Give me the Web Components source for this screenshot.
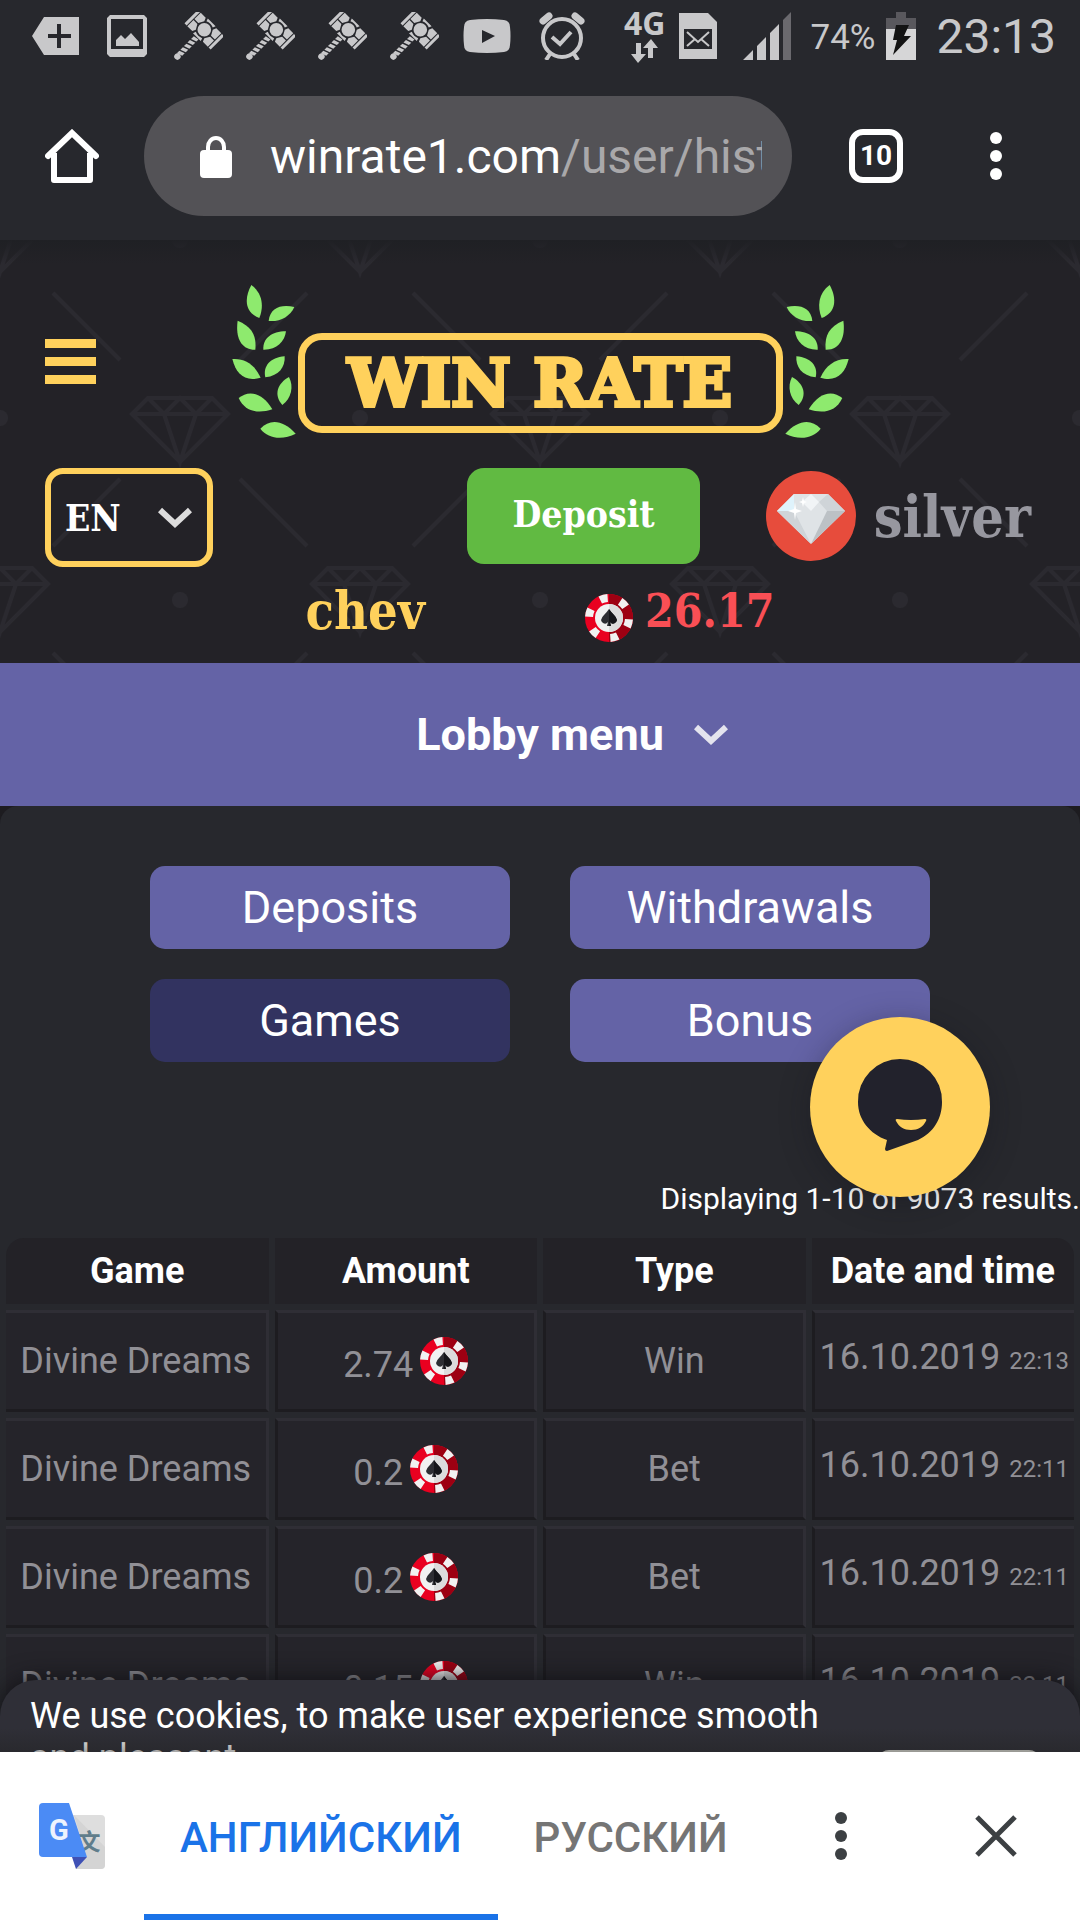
<!DOCTYPE html>
<html lang="en">
<head>
<meta charset="utf-8">
<meta name="viewport" content="width=device-width, initial-scale=1">
<title>Win Rate - History</title>
<style>
  :root {
    --bar: #27282d;
    --dark: #232227;
    --gold: #ffd15c;
    --purple: #6463a6;
    --slab: "DejaVu Serif Condensed", "DejaVu Serif", serif;
  }

  body {
    margin: 0;
    height: 100vh;
    display: flex;
    flex-direction: column;
    overflow: hidden;
    background: var(--bar);
    color: #fff;
    font-family: Roboto, sans-serif;
  }
</style>
</head>
<body>
<status-bar></status-bar>
<browser-bar tabs="10"><span slot="host">winrate1.com</span><span slot="path">/user/hist</span></browser-bar>
<web-view>
  <site-header user="chev" balance="26.17" rank="silver"></site-header>
  <lobby-menu>Lobby menu</lobby-menu>
  <history-panel>
    <nav-button slot="nav">Deposits</nav-button>
    <nav-button slot="nav">Withdrawals</nav-button>
    <nav-button slot="nav" active>Games</nav-button>
    <nav-button slot="nav">Bonus</nav-button>
    <span slot="summary">Displaying 1-10 of 9073 results.</span>
    <history-table data='[
      {"game":"Divine Dreams","amount":"2.74","type":"Win","date":"16.10.2019","time":"22:13"},
      {"game":"Divine Dreams","amount":"0.2","type":"Bet","date":"16.10.2019","time":"22:11"},
      {"game":"Divine Dreams","amount":"0.2","type":"Bet","date":"16.10.2019","time":"22:11"},
      {"game":"Divine Dreams","amount":"0.15","type":"Win","date":"16.10.2019","time":"22:11"}
    ]'></history-table>
  </history-panel>
  <chat-button slot="overlay"></chat-button>
  <cookie-banner slot="overlay">We use cookies, to make user experience smooth and pleasant</cookie-banner>
</web-view>
<translate-bar></translate-bar>

<script>
function define(name, render) {
  customElements.define(name, class extends HTMLElement {
    constructor() {
      super();
      this.attachShadow({ mode: "open" });
      this.shadowRoot.innerHTML = render(this);
    }
  });
}

const buttonReset = `
  button {
    margin: 0;
    padding: 0;
    border: none;
    background: none;
    color: inherit;
    font: inherit;
    cursor: pointer;
  }
  svg {
    display: block;
    flex: none;
  }
`;

const hammer = `
  <svg width="50" height="48" viewBox="0 0 50 48" fill="#c8c8ca">
    <g transform="translate(31.3 17.7) rotate(45)">
      <circle r="6.8"/>
      <path d="M-18.5-9.5h3v19h-3zM15.5-9.5h3v19h-3z"/>
      <path d="M-14.5-9.5h7l1.5 3.5-3 5.5h-5.5zM-14.5.8h5.5l3 5.2-1.5 3.5h-7zM14.5-9.5h-7L6-6l3 5.5h5.500zM14.500.8H9L6 6l1.500 3.500h7z"/>
      <path d="M-5.500-10.500h11L4.500-7.500Q0-9.500-4.500-7.500zM-5.500 10.500h11L4.500 7.500Q0 9.500-4.500 7.500z"/>
      <path d="M-2.800 12l5.600-1v3l-5.600 2zM-2.800 17.500l5.600-2v3.500l-5.600 2zM-2.800 22.500l5.600-2V24l-5.600 2zM-2.800 27.500l5.600-2V29l-5.600 2zM-2.800 32.500l5.600-2V34l-5.600 2z"/>
      <circle cy="38" r="3.200"/>
    </g>
  </svg>
`;

define("status-bar", () => `
  <style>
    :host {
      display: flex;
      align-items: center;
      justify-content: space-between;
      height: 72px;
      padding: 0 24px 0 32px;
      color: #c8c8ca;
      flex: none;
    }
    div {
      display: flex;
      align-items: center;
    }
    .left { gap: 22px; }
    .photo { margin: 0 4px 0 6px; }
    .video { margin-left: 2px; }
    .alarm { margin-left: 6px; }
    svg { display: block; }
    .net { flex-direction: column; font: 700 32px/28px "Noto Sans", sans-serif; gap: 2px; }
    .sim { margin: 0 26px 0 14px; }
    .percent { font-size: 35px; line-height: 44px; padding-top: 4px; margin: 0 11px 0 18px; }
    time { font-size: 48px; line-height: 56px; padding-top: 2px; margin-left: 20px; }
  </style>
  <div class="left">
    <svg width="47" height="38" viewBox="0 0 47 38"><path fill="#c8c8ca" fill-rule="evenodd" d="M12 0h35v38H12L0 19zM25 7v10H16v4h9v10h4V21h10v-4H29V7z"/></svg>
    <svg class="photo" width="40" height="42" viewBox="0 0 40 42"><path fill="#c8c8ca" fill-rule="evenodd" d="M3 0h34l3 3v36l-3 3H3l-3-3V3zM4 4v30h32V4zM9 31v-6l5-5 4 4 6-6 8 9v4z"/></svg>
    ${hammer.repeat(4)}
    <svg class="video" width="48" height="34" viewBox="0 0 48 34"><path fill="#c8c8ca" fill-rule="evenodd" d="M7 1Q24-1 41 1q6 1 6 7 1 9 0 18 0 6-6 7-17 2-34 0-6-1-6-7-1-9 0-18 0-6 6-7zm12 10v13l13-7z"/></svg>
    <svg class="alarm" width="46" height="48" viewBox="0 0 46 48" fill="none" stroke="#c8c8ca">
      <circle cx="23" cy="26" r="19" stroke-width="4"/>
      <path stroke-width="4" d="M13 25l8 7 11-12M11 42l-4 6M35 42l4 6"/>
      <path stroke-width="7" stroke-linecap="round" d="M4 9l6-5M42 9l-6-5"/>
    </svg>
  </div>
  <div>
    <div class="net">4G
      <svg width="28" height="24" viewBox="0 0 28 24"><path fill="#c8c8ca" d="M5 4h5v11h5L7 24 0 15h5zM17 19V9h-5l8-9 7 9h-5v10z"/></svg>
    </div>
    <svg class="sim" width="38" height="46" viewBox="0 0 38 46"><path fill="#c8c8ca" d="M0 0h29l9 9v37H0z"/><path fill="#27282d" d="M5 16h28v20H5z"/><path fill="none" stroke="#c8c8ca" stroke-width="2" d="M8 19l11 10 11-10M8 33l8-7M30 33l-8-7"/></svg>
    <svg width="49" height="48" viewBox="0 0 49 48"><path fill="#c8c8ca" d="M0 48l10-10v10zM14 34l9-9v23h-9zM27 21l9-9v36h-9z"/><path fill="#6a696e" d="M40 8l8-8v48h-8z"/></svg>
    <span class="percent">74%</span>
    <svg width="30" height="48" viewBox="0 0 30 48"><path fill="#59585d" d="M10 0h10v6h10v12H0V6h10z"/><path fill="#d6d6d7" d="M0 17h30v31H0z"/><path fill="#141414" d="M10 13h13l-5 11h7L7 43l4-15H7z"/></svg>
    <time>23:13</time>
  </div>
`);

define("browser-bar", (el) => `
  <style>
    ${buttonReset}
    :host {
      display: flex;
      align-items: center;
      height: 168px;
      padding-right: 24px;
      flex: none;
    }
    .home { width: 144px; }
    button {
      width: 120px;
      display: flex;
      justify-content: center;
      align-items: center;
    }
    .url {
      flex: 1;
      min-width: 0;
      height: 120px;
      margin-right: 24px;
      padding: 2px 30px 0 56px;
      border-radius: 60px;
      background: #535256;
      justify-content: flex-start;
      gap: 38px;
      font-size: 48px;
    }
    .address {
      flex: 1;
      overflow: hidden;
      white-space: nowrap;
      text-align: left;
      line-height: 60px;
    }
    ::slotted([slot="path"]) { color: #a9a8aa; }
    .count {
      box-sizing: border-box;
      width: 54px;
      height: 54px;
      border: 6px solid #fff;
      border-radius: 14px;
      font: 700 28px/42px Roboto, sans-serif;
    }
  </style>
  <button class="home" aria-label="Home">
    <svg width="54" height="54" viewBox="0 0 54 54" fill="none" stroke="#fff" stroke-width="6" stroke-linecap="round" stroke-linejoin="round"><path stroke-linecap="butt" d="M9 24v27h36V24"/><path d="M3 27L27 4l24 23" stroke-linejoin="miter"/></svg>
  </button>
  <button class="url" aria-label="Address">
    <svg width="32" height="42" viewBox="0 0 32 42"><rect y="14" width="32" height="28" rx="4" fill="#fff"/><path d="M8 17v-6a8 9 0 0 1 16 0v6" fill="none" stroke="#fff" stroke-width="4"/></svg>
    <span class="address"><slot name="host"></slot><slot name="path"></slot></span>
  </button>
  <button aria-label="Tabs"><span class="count">${el.getAttribute("tabs")}</span></button>
  <button aria-label="Menu">
    <svg width="12" height="48" viewBox="0 0 12 48" fill="#fff"><circle cx="6" cy="6" r="6"/><circle cx="6" cy="24" r="6"/><circle cx="6" cy="42" r="6"/></svg>
  </button>
`);

define("web-view", () => `
  <style>
    :host {
      display: block;
      position: relative;
      flex: 1;
      min-height: 0;
      overflow: hidden;
      background: #1d1c20;
    }
  </style>
  <slot></slot>
  <slot name="overlay"></slot>
`);

define("poker-chip", () => `
  <style>
    :host { display: inline-block; }
    svg { display: block; }
  </style>
  <svg width="48" height="48" viewBox="0 0 48 48">
    <circle cx="24" cy="24" r="24" fill="#e90020"/>
    <path fill="#9d0012" d="M24 0a24 24 0 0 1 0 48z"/>
    <circle cx="24" cy="24" r="20" fill="none" stroke="#f1f1f1" stroke-width="8" pathLength="360" stroke-dasharray="22 38" stroke-dashoffset="-4"/>
    <circle cx="24" cy="24" r="14" fill="#f1f1f1"/>
    <path fill="#dcdcdc" d="M24 10a14 14 0 0 1 0 28z"/>
    <path fill="#2d2e33" d="M24 15q2 3 5 6 5 5 1 8-3 2-5-1l1 4h-4l1-4q-2 3-5 1-4-3 1-8 3-3 5-6z"/>
    <path fill="#15161a" d="M24 15q2 3 5 6 5 5 1 8-3 2-5-1l1 4h-2z"/>
  </svg>
`);

define("win-logo", () => {
  const laurel = `
    <svg width="66" height="153" viewBox="36 45 198 459" fill="#8eea6e">
      <path d="M94 45C72 85 74 128 118 144C132 110 128 70 94 45"/>
      <path d="M146 153C150 112 185 102 223 111C210 140 180 156 146 153"/>
      <path d="M53 152C46 200 62 240 106 239C110 195 95 170 53 152"/>
      <path d="M130 239C128 205 155 184 198 184C194 215 170 240 130 239"/>
      <path d="M37 267C48 312 75 337 122 323C105 285 75 264 37 267"/>
      <path d="M136 322C128 290 150 262 194 259C196 290 178 318 136 322"/>
      <path d="M187 405C160 375 172 340 207 321C222 350 214 385 187 405"/>
      <path d="M56 384C85 360 125 365 157 418C115 432 75 426 56 384"/>
      <path d="M121 476C150 445 190 450 227 491C190 510 145 508 121 476"/>
    </svg>
  `;
  return `
    <style>
      :host { display: block; }
      a {
        display: flex;
        align-items: flex-end;
        color: var(--gold);
        text-decoration: none;
      }
      svg { display: block; }
      .mirror svg { transform: scaleX(-1); }
      .name {
        box-sizing: border-box;
        width: 485px;
        height: 100px;
        margin-bottom: 5px;
        border: 7px solid var(--gold);
        border-radius: 24px;
        text-align: center;
        font: 700 65px/86px "DejaVu Serif", serif;
        -webkit-text-stroke: 4px var(--gold);
        stroke-linejoin: round;
        white-space: nowrap;
      }
    </style>
    <a href="#">${laurel}<span class="name">WIN RATE</span><span class="mirror">${laurel}</span></a>
  `;
});

// 360px tile: two diamonds, two dots and four strokes
const tile = encodeURIComponent(`
  <svg xmlns="http://www.w3.org/2000/svg" xmlns:xlink="http://www.w3.org/1999/xlink" width="360" height="360" fill="none" stroke="#2b2a30" stroke-width="4">
    <defs><path id="d" d="M-32 2H32L48 18L0 66L-48 18ZM-48 18H48M-32 2L-16 18L0 2L16 18L32 2M-16 18L0 66L16 18"/></defs>
    <use xlink:href="#d"/><use xlink:href="#d" x="360"/><use xlink:href="#d" x="180" y="190"/>
    <g fill="#2b2a30" stroke="none"><circle cx="180" cy="34" r="8"/><circle cy="212" r="8"/><circle cx="360" cy="212" r="8"/></g>
    <path d="M53 87L120 154M307 87L240 154M120 273L53 340M240 273L307 340"/>
  </svg>
`);

const chevron = encodeURIComponent(`<svg xmlns="http://www.w3.org/2000/svg" width="34" height="22" fill="none" stroke="#ddd" stroke-width="6"><path d="M2 3L17 17L32 3"/></svg>`);

define("site-header", (el) => `
  <style>
    ${buttonReset}
    :host {
      display: block;
      padding: 45px 45px 0;
      background: linear-gradient(#1f2024, transparent 24px), url("data:image/svg+xml,${tile}") 0 -34px, var(--dark);
      font-family: var(--slab);
      font-weight: 700;
    }
    .top {
      display: grid;
      grid-template-columns: 1fr auto 1fr;
      align-items: center;
      justify-items: start;
    }
    .actions {
      display: flex;
      justify-content: space-between;
      margin-top: 30px;
    }
    select {
      appearance: none;
      width: 168px;
      height: 99px;
      padding: 0 0 0 14px;
      border: 6px solid var(--gold);
      border-radius: 18px;
      background: url("data:image/svg+xml,${chevron}") right 15px center no-repeat;
      color: #fff;
      font: 700 37px var(--slab);
    }
    .group {
      display: flex;
      align-items: center;
      height: 96px;
    }
    .deposit {
      height: 96px;
      padding: 0 45px 4px;
      margin-right: 66px;
      border-radius: 17px;
      background: #61ba42;
      color: #fff;
      font-size: 37px;
    }
    .rank {
      margin: 0 4px 0 18px;
      color: #97979f;
      font-size: 57px;
    }
    .account {
      display: flex;
      justify-content: center;
      gap: 160px;
      line-height: 88px;
      padding-bottom: 8px;
      font-size: 52px;
      color: var(--gold);
    }
    .balance {
      display: flex;
      align-items: center;
      gap: 12px;
      color: #f94f55;
      font-size: 46px;
    }
    poker-chip { margin-top: 14px; }
  </style>
  <div class="top">
    <button aria-label="Open menu">
      <svg width="51" height="45" viewBox="0 0 51 45" fill="#ffd15c"><path d="M0 0h51v9H0zM0 18h51v9H0zM0 36h51v9H0z"/></svg>
    </button>
    <win-logo></win-logo>
  </div>
  <div class="actions">
    <select aria-label="Language"><option>EN</option><option>RU</option></select>
    <div class="group">
      <button class="deposit">Deposit</button>
      <svg width="90" height="90" viewBox="0 0 90 90">
        <circle cx="45" cy="45" r="45" fill="#e74c3c"/>
        <path fill="#dfe3e6" d="M28 23h34l17 17-34 33-34-33z"/>
        <path fill="#dff3fc" d="M11 40l17-17v17z"/>
        <path fill="#cfd4d8" d="M62 23l17 17H61l-8-9zM11 40h17l17 33z"/>
        <path fill="#bcc1c5" d="M79 40H61L45 73z"/>
        <path fill="#f1f4f6" d="M45 23l8 8-8 9-9-9z"/>
        <path fill="#fff" d="M29 31l1 7 6 2-6 2-1 7-1-7-6-2 6-2zM37 26l1 4 3 1-3 1-1 4-1-4-3-1 3-1z"/>
      </svg>
      <span class="rank">${el.getAttribute("rank")}</span>
    </div>
  </div>
  <div class="account">
    <span>${el.getAttribute("user")}</span>
    <span class="balance"><poker-chip></poker-chip>${el.getAttribute("balance")}</span>
  </div>
`);

define("lobby-menu", () => `
  <style>
    ${buttonReset}
    :host { display: block; }
    button {
      display: grid;
      grid-template-columns: 1fr auto 1fr;
      align-items: center;
      width: 100%;
      height: 143px;
      background: var(--purple);
      font-size: 45px;
      font-weight: 700;
    }
    span { grid-column: 2; }
    svg { margin-left: 30px; }
  </style>
  <button>
    <span><slot></slot></span>
    <svg width="34" height="22" viewBox="0 0 34 22" fill="none" stroke="#e4e4ee" stroke-width="6"><path d="M2 3L17 17L32 3"/></svg>
  </button>
`);

define("nav-button", () => `
  <style>
    ${buttonReset}
    :host { display: block; }
    button {
      width: 100%;
      height: 83px;
      border-radius: 15px;
      background: var(--purple);
      font-size: 45px;
    }
    :host([active]) button { background: #323360; }
  </style>
  <button><slot></slot></button>
`);

define("history-panel", () => `
  <style>
    :host {
      display: block;
      padding-top: 60px;
      border-radius: 18px 18px 0 0;
      background: var(--bar);
    }
    nav {
      display: grid;
      grid-template-columns: 1fr 1fr;
      gap: 30px 60px;
      padding: 0 150px;
    }
    p {
      margin: 119px 0 15px;
      text-align: right;
      font-size: 30px;
      line-height: 36px;
    }
  </style>
  <nav><slot name="nav"></slot></nav>
  <p><slot name="summary"></slot></p>
  <slot></slot>
`);

class HistoryTable extends HTMLElement {
  constructor() {
    super();
    this.attachShadow({ mode: "open" });

    const rows = JSON.parse(this.getAttribute("data"));

    function renderRow(row) {
      return `
        <tr>
          <td>${row.game}</td>
          <td><div class="amount"><span>${row.amount}</span><poker-chip></poker-chip></div></td>
          <td>${row.type}</td>
          <td><time>${row.date} <small>${row.time}</small></time></td>
        </tr>
      `;
    }

    this.shadowRoot.innerHTML = `
      <style>
        :host { display: block; }
        table {
          width: 100%;
          table-layout: fixed;
          border-spacing: 6px;
          font-size: 36px;
          line-height: 42px;
          text-align: center;
        }
        th {
          height: 66px;
          padding: 0;
          background: var(--dark);
        }
        th:first-child { border-top-left-radius: 18px; }
        th:last-child { border-top-right-radius: 18px; }
        td {
          box-sizing: border-box;
          height: 102px;
          padding: 0;
          border: 3px solid;
          border-color: #2f2e35 #2f2e35 #1d1c20 #1d1c20;
          background: #25242a;
          color: #919096;
          white-space: nowrap;
        }
        td:first-child { border-left: none; }
        td:last-child { border-right: none; }
        .amount {
          display: flex;
          align-items: center;
          justify-content: center;
          gap: 7px;
        }
        .amount span { padding-top: 8px; }
        time {
          display: block;
          padding-bottom: 4px;
        }
        small { font-size: 24px; }
      </style>
      <table>
        <thead>
          <tr><th>Game</th><th>Amount</th><th>Type</th><th>Date and time</th></tr>
        </thead>
        <tbody>${rows.map(renderRow).join("")}</tbody>
      </table>
    `;
  }
}
customElements.define("history-table", HistoryTable);

define("chat-button", () => `
  <style>
    ${buttonReset}
    :host {
      position: absolute;
      right: 90px;
      bottom: 555px;
    }
    button {
      display: block;
      width: 180px;
      height: 180px;
      border-radius: 50%;
      background: var(--gold);
      box-shadow: 0 6px 30px rgba(20, 20, 30, 0.35);
    }
  </style>
  <button aria-label="Open chat">
    <svg width="180" height="180" viewBox="0 0 180 180">
      <path fill="#22222c" d="M90 42a42 42 0 0 1 42 43c0 17-9 31-24 38L77 134q-2 0-2-2l2-9C60 117 48 103 48 85a42 42 0 0 1 42-43z"/>
      <path fill="#ffd15c" d="M87 102q14 2 28 0 2 0 1 2c-3 6-8 9-15 9s-12-3-15-9q-1-2 1-2z"/>
    </svg>
  </button>
`);

define("cookie-banner", () => `
  <style>
    :host {
      position: absolute;
      left: 0;
      right: 0;
      bottom: 0;
      height: 72px;
      display: block;
      border-radius: 36px 36px 0 0;
      background: #2f2f37;
      box-shadow: 0 0 24px #101014;
    }
    div {
      box-sizing: border-box;
      display: flex;
      gap: 32px;
      height: 72px;
      padding: 0 39px 0 30px;
      overflow: hidden;
      border-radius: inherit;
    }
    p {
      flex: 1;
      margin: 15px 0 0;
      font-size: 36px;
      line-height: 42px;
    }
    button {
      width: 164px;
      height: 72px;
      margin-top: 70px;
      border: none;
      border-radius: 12px;
      background: #e8e8e0;
    }
    div::after {
      content: "";
      position: absolute;
      inset: auto 0 0;
      height: 24px;
      background: linear-gradient(transparent, rgba(32, 32, 32, 0.4));
    }
  </style>
  <div>
    <p><slot></slot></p>
    <button aria-label="Accept"></button>
  </div>
`);

define("translate-bar", () => `
  <style>
    ${buttonReset}
    :host {
      display: flex;
      align-items: center;
      flex: none;
      height: 168px;
      padding-right: 6px;
      background: #fff;
      color: #757575;
    }
    .logo { margin: 0 39px; }
    .tab {
      box-sizing: border-box;
      height: 168px;
      padding: 8px 36px 0;
      border-bottom: 6px solid transparent;
      font-size: 42px;
      font-weight: 500;
    }
    .selected {
      border-color: #1a73e8;
      color: #1a73e8;
    }
    .icon {
      width: 156px;
      height: 168px;
      display: flex;
      align-items: center;
      justify-content: center;
    }
    .more { margin-left: auto; }
  </style>
  <svg class="logo" width="66" height="66" viewBox="0 0 66 66">
    <path fill="#dedede" d="M30 12h32q4 0 4 4v46q0 4-4 4H37z"/>
    <path fill="#cdcdcd" d="M35 12l31 32v18q0 4-4 4H37l11-12z" opacity=".6"/>
    <text x="50" y="47" text-anchor="middle" font-family="Noto Sans CJK SC, sans-serif" font-size="23" font-weight="700" fill="#607d8b">文</text>
    <path fill="#3f51b5" d="M33 54h15L37 66z"/>
    <path fill="#4b8bf5" d="M4 0h26l18 54H4q-4 0-4-4V4q0-4 4-4z"/>
    <text x="20" y="37" text-anchor="middle" font-family="Roboto, sans-serif" font-size="29" font-weight="700" fill="#eef3fd">G</text>
  </svg>
  <button class="tab selected">АНГЛИЙСКИЙ</button>
  <button class="tab">РУССКИЙ</button>
  <button class="icon more" aria-label="Options">
    <svg width="12" height="48" viewBox="0 0 12 48" fill="#3c4043"><circle cx="6" cy="6" r="6"/><circle cx="6" cy="24" r="6"/><circle cx="6" cy="42" r="6"/></svg>
  </button>
  <button class="icon" aria-label="Close">
    <svg width="42" height="42" viewBox="0 0 42 42" stroke="#3c4043" stroke-width="5"><path d="M2 2L40 40M40 2L2 40"/></svg>
  </button>
`);
</script>
</body>
</html>
